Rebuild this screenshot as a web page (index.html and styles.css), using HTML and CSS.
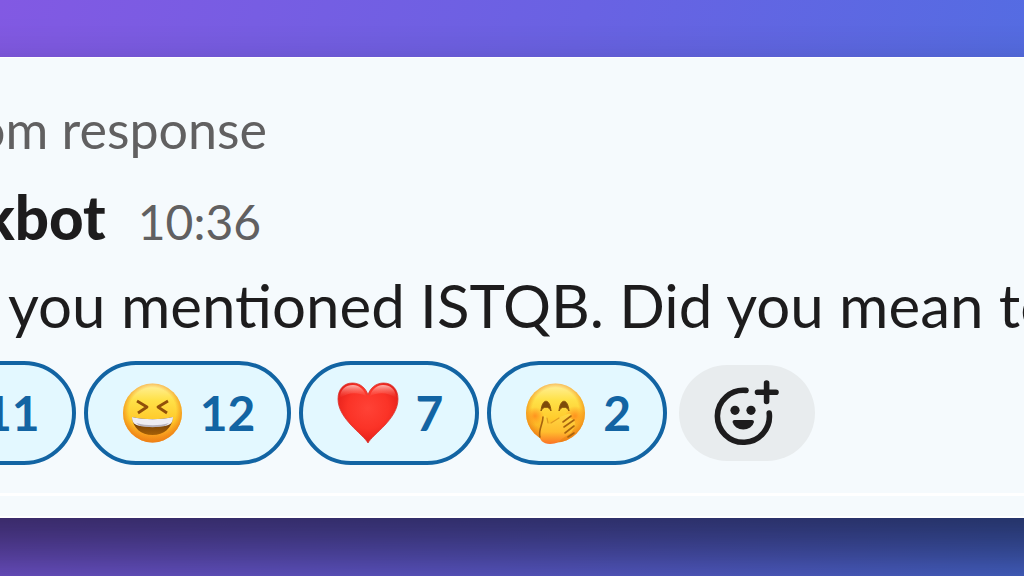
FILE: index.html
```html
<!DOCTYPE html>
<html lang="en">
<head>
<meta charset="utf-8">
<title>Slackbot message</title>
<link rel="stylesheet" href="styles.css">
</head>
<body>
<main class="panel">
  <article class="message">
    <p class="context">om response</p>
    <header class="byline">
      <h1 class="sender">kbot</h1>
      <time class="time">10:36</time>
    </header>
    <p class="text">you mentioned ISTQB. Did you mean to</p>
    <div class="reactions">
      <button class="reaction" type="button">11</button>
      <button class="reaction" type="button">
        <svg class="emoji" viewBox="0 0 64 64" aria-hidden="true">
          <defs>
            <linearGradient id="face" x1="0" y1="0" x2="0" y2="1">
              <stop offset="0" stop-color="#fff1a0"/><stop offset=".28" stop-color="#ffe148"/><stop offset=".6" stop-color="#ffcb2c"/><stop offset="1" stop-color="#f58a18"/>
            </linearGradient>
            <radialGradient id="rim" cx=".5" cy=".47" r=".53">
              <stop offset=".75" stop-color="#f28a16" stop-opacity="0"/><stop offset="1" stop-color="#ec7d16" stop-opacity=".85"/>
            </radialGradient>
            <linearGradient id="mouth" x1="0" y1="0" x2="0" y2="1">
              <stop offset="0" stop-color="#5c3008"/><stop offset="1" stop-color="#a66006"/>
            </linearGradient>
          </defs>
          <circle cx="32.500" cy="32" r="29.500" fill="url(#face)"/>
          <circle cx="32.500" cy="32" r="29.500" fill="url(#rim)"/>
          <path d="M17 20 27 26 18 32M48 20 38 26 47 32" fill="none" stroke="#91500a" stroke-width="2.800" stroke-linejoin="round"/>
          <path d="M12 36C25 39 40 39 53 36 52 47 44 54 32.500 54S13 47 12 36Z" fill="url(#mouth)"/>
          <path d="M12 36C25 39 40 39 53 36 53 42 50 44 45 45 37 46 28 46 20 45 15 44 12 42 12 36Z" fill="#eeedf3"/>
          <path d="M16 42C27 45 39 45 49 42L45 45C37 46.500 28 46.500 20 45Z" fill="#b8b3bd"/>
        </svg>
        12
      </button>
      <button class="reaction" type="button">
        <svg class="emoji" viewBox="0 0 64 64" aria-hidden="true">
          <defs>
            <radialGradient id="heart" cx=".5" cy=".42" r=".62">
              <stop offset="0" stop-color="#ff4236"/><stop offset=".55" stop-color="#fb3327"/><stop offset=".85" stop-color="#e9231c"/><stop offset="1" stop-color="#bf1510"/>
            </radialGradient>
            <linearGradient id="gloss" x1="0" y1="0" x2="0" y2="1">
              <stop offset="0" stop-color="#ffc3bd" stop-opacity=".9"/><stop offset="1" stop-color="#ff5a4c" stop-opacity="0"/>
            </linearGradient>
          </defs>
          <g transform="translate(1)">
            <path d="M32 62C27 53 2 38 2 18 2 8 8 2 16.500 2 24 2 30 7 32 14 34 7 40 2 47.500 2 56 2 62 8 62 18 62 38 37 53 32 62Z" fill="url(#heart)" stroke="#d9342d" stroke-width=".8"/>
            <path d="M4 17C4 8 10 4 17 4 23 4 28 8 30 15 22 11 12 11 4 17ZM34 15C36 8 41 4 47 4 54 4 60 8 60 17 52 11 42 11 34 15Z" fill="url(#gloss)"/>
          </g>
        </svg>
        7
      </button>
      <button class="reaction" type="button">
        <svg class="emoji" viewBox="0 0 64 64" aria-hidden="true">
          <defs>
            <radialGradient id="cheek">
              <stop offset="0" stop-color="#ff7a18" stop-opacity=".7"/><stop offset="1" stop-color="#ff7a18" stop-opacity="0"/>
            </radialGradient>
            <linearGradient id="hand" x1="0" y1="0" x2="0" y2="1">
              <stop offset="0" stop-color="#ffd944"/><stop offset=".6" stop-color="#ffbd2e"/><stop offset="1" stop-color="#fb7224"/>
            </linearGradient>
          </defs>
          <circle cx="32.500" cy="32" r="29.500" fill="url(#face)"/>
          <circle cx="32.500" cy="32" r="29.500" fill="url(#rim)"/>
          <circle cx="12" cy="35" r="9" fill="url(#cheek)"/>
          <circle cx="52" cy="35" r="10" fill="url(#cheek)"/>
          <path d="M18 30C19 17 27 17 28 30 26 25 20 25 18 30ZM36 30C37 17 45 17 46 30 44 25 38 25 36 30Z" fill="#7d4a0a" stroke="#8d560c" stroke-linejoin="round"/>
          <path d="M20 37C20 34 23 34 24 37L26 43 37 36 45 33C48 32 49 35 47 37L51 39 52 42 51 47 48 52 40 57C36 60 34 63 27 63 20 63 16 59 16 52Z" fill="url(#hand)"/>
          <path d="M17 56C15 49 20 43 20 36M40 41 48 35M41 46 51 39M42 52 51 45M45 56 51 52" fill="none" stroke="#a8640f" stroke-width="1.600" stroke-linecap="round"/>
          <path d="M25 42 24 37M28 42 36 37" fill="none" stroke="#e09a20" stroke-width="1.200" stroke-linecap="round"/>
        </svg>
        2
      </button>
      <button class="add" type="button" aria-label="Add reaction">
        <svg class="add-icon" viewBox="0 0 72 72" aria-hidden="true">
          <g fill="none" stroke="#1d1c1d" stroke-width="5.600" stroke-linecap="round">
            <path d="M35 13.400A26 26 0 1 0 58.200 36"/>
            <path d="M55.600 6V24.500M46.500 15.200H65"/>
          </g>
          <circle cx="24" cy="33.300" r="4.600" fill="#1d1c1d"/>
          <circle cx="40" cy="33.300" r="4.600" fill="#1d1c1d"/>
          <path d="M23.500 43H41Q43 43 43 45A11 9.500 0 0 1 21.500 45Q21.500 43 23.500 43Z" fill="#1d1c1d"/>
        </svg>
      </button>
    </div>
  </article>
</main>
</body>
</html>
```
FILE: styles.css
```css
* {
  box-sizing: border-box;
}

body {
  margin: 0;
  min-height: 100vh;
  padding-top: 57px;
  overflow: hidden;
  background: linear-gradient(105deg, #835ae4, #6a63e4 50%, #4f70e3);
  color: #1d1c1d;
  font-family: Lato, "Liberation Sans", sans-serif;
}

/* The panel bleeds past both sides of the window. */
.panel {
  margin: 0 -120px;
  padding: 0 120px 20px;
  border-top: 1px solid #fff;
  border-bottom: 2px solid #fff;
  background: #f5fafd;
  box-shadow: 0 44px 72px rgba(0, 0, 0, 0.6);
}

.message {
  margin: 0 -120px;
  padding: 39px 120px 28px;
  border-bottom: 3px solid #fff;
}

.context,
.sender,
.text {
  margin: 0;
  white-space: nowrap;
}

.context {
  margin-left: -24px;
  color: #616061;
  font-size: 52px;
  line-height: 64px;
}

.byline {
  display: flex;
  align-items: baseline;
  gap: 32px;
  margin: 16px 0 0 -18px;
}

.sender {
  font-size: 60px;
  font-weight: 900;
  line-height: 80px;
}

.time {
  color: #616061;
  font-size: 48px;
}

.text {
  margin: 4px 0 0 8px;
  font-size: 60px;
  line-height: 88px;
}

.reactions {
  display: flex;
  align-items: center;
  gap: 8px;
  margin: 12px 0 0 -52px;
}

.reaction {
  display: flex;
  flex: none;
  align-items: center;
  gap: 16px;
  height: 104px;
  padding: 0 32px;
  border: 4px solid #1264a3;
  border-radius: 52px;
  background: #e3f8ff;
  color: #1264a3;
  font: 700 48px/60px Lato, "Liberation Sans", sans-serif;
}

.emoji {
  width: 64px;
  height: 64px;
}

.add {
  display: grid;
  flex: none;
  place-items: center;
  width: 136px;
  height: 96px;
  margin-left: 4px;
  padding: 0;
  border: 0;
  border-radius: 48px;
  background: #e8ecee;
}

.add-icon {
  width: 72px;
  height: 72px;
}
```
